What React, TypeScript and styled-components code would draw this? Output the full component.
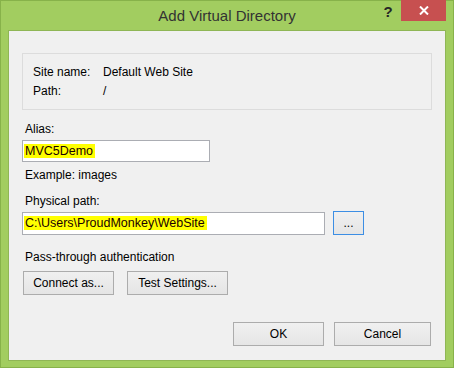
import React from "react";
import styled, { createGlobalStyle } from "styled-components";

const Global = createGlobalStyle`
  html, body { margin: 0; padding: 0; background: #fff; }
  body { font-family: "Liberation Sans", Arial, sans-serif; }
  * { box-sizing: border-box; }
`;

const Frame = styled.div`
  width: 454px;
  height: 368px;
  background: #a2cd60;
  border: 1px solid #87b24a;
  display: flex;
  flex-direction: column;
  padding: 0 7px 6px 7px;
`;

const TitleBar = styled.div`
  height: 29px;
  display: grid;
  grid-template-columns: 1fr auto 1fr;
  align-items: start;
`;

const Title = styled.div`
  grid-column: 2;
  font-family: "Liberation Sans", Arial, sans-serif;
  font-size: 15px;
  color: #333;
  line-height: 16px;
  padding-top: 7px;
  white-space: nowrap;
`;

const Controls = styled.div`
  grid-column: 3;
  justify-self: end;
  display: flex;
  align-items: flex-start;
  margin-top: -1px;
`;

const HelpGlyph = styled.div`
  width: 26px;
  height: 20px;
  font-size: 15px;
  font-weight: bold;
  color: #262626;
  line-height: 20px;
  text-align: center;
  padding-top: 2px;
`;

const CloseBtn = styled.div`
  width: 45px;
  height: 21px;
  background: #c75050;
  display: flex;
  align-items: center;
  justify-content: center;
`;

const Client = styled.div`
  flex: 1;
  background: #f0f0f0;
  border: 1px solid #8fb655;
  display: flex;
  flex-direction: column;
  padding: 0 13px 14px 13px;
  font-size: 12px;
  color: #000;
`;

const GroupBox = styled.div`
  margin-top: 22px;
  border: 1px solid #dcdcdc;
  padding: 10px 10px;
  display: grid;
  grid-template-columns: 70px 1fr;
  row-gap: 3px;
`;

const Text = styled.div<{ $mt?: number; $ml?: number }>`
  line-height: 16px;
  font-size: 12px;
  margin-top: ${(p) => p.$mt ?? 0}px;
  margin-left: ${(p) => p.$ml ?? 0}px;
  white-space: nowrap;
  color: #000;
`;

const Input = styled.div<{ $w: number; $h: number; $mt?: number }>`
  width: ${(p) => p.$w}px;
  height: ${(p) => p.$h}px;
  margin-top: ${(p) => p.$mt ?? 0}px;
  background: #fff;
  border: 1px solid #abadb3;
  display: flex;
  align-items: center;
  padding-left: 1px;
`;

const Highlight = styled.span`
  background: #ffff00;
  font-size: 12.5px;
  line-height: 14px;
  padding: 0 2px 0 1px;
  color: #1a0000;
  white-space: nowrap;
`;

const Row = styled.div<{ $mt?: string; $gap: number; $justify?: string; $px?: string }>`
  display: flex;
  align-items: center;
  gap: ${(p) => p.$gap}px;
  margin-top: ${(p) => p.$mt ?? "0"};
  padding: ${(p) => p.$px ?? "0"};
  justify-content: ${(p) => p.$justify ?? "flex-start"};
`;

const Button = styled.div<{ $w: number; $focus?: boolean }>`
  width: ${(p) => p.$w}px;
  height: 24px;
  border: 1px solid ${(p) => (p.$focus ? "#3c8ee4" : "#acacac")};
  background: linear-gradient(#f0f0f0, #e5e5e5);
  display: flex;
  align-items: center;
  justify-content: center;
  font-size: 12px;
  color: #000;
  white-space: nowrap;
`;

export default function App() {
  return (
    <>
      <Global />
      <Frame>
        <TitleBar>
          <Title>Add Virtual Directory</Title>
          <Controls>
            <HelpGlyph>?</HelpGlyph>
            <CloseBtn>
              <svg width="10" height="9" viewBox="0 0 10 9">
                <path d="M1 0.5 L9 8.5 M9 0.5 L1 8.5" stroke="#fff" strokeWidth="2" />
              </svg>
            </CloseBtn>
          </Controls>
        </TitleBar>
        <Client>
          <GroupBox>
            <Text>Site name:</Text>
            <Text>Default Web Site</Text>
            <Text>Path:</Text>
            <Text>/</Text>
          </GroupBox>
          <Text $mt={11} $ml={3}>Alias:</Text>
          <Input $w={188} $h={22} $mt={3}>
            <Highlight>MVC5Demo</Highlight>
          </Input>
          <Text $mt={5} $ml={3}>Example: images</Text>
          <Text $mt={10} $ml={3}>Physical path:</Text>
          <Row $mt="2px" $gap={8}>
            <Input $w={303} $h={23}>
              <Highlight>C:\Users\ProudMonkey\WebSite</Highlight>
            </Input>
            <Button $w={31} $focus>...</Button>
          </Row>
          <Text $mt={14} $ml={3}>Pass-through authentication</Text>
          <Row $mt="6px" $gap={13} $px="0 0 0 1px">
            <Button $w={91}>Connect as...</Button>
            <Button $w={101}>Test Settings...</Button>
          </Row>
          <Row $mt="auto" $gap={10} $justify="flex-end" $px="0 1px 0 0">
            <Button $w={91}>OK</Button>
            <Button $w={97}>Cancel</Button>
          </Row>
        </Client>
      </Frame>
    </>
  );
}
